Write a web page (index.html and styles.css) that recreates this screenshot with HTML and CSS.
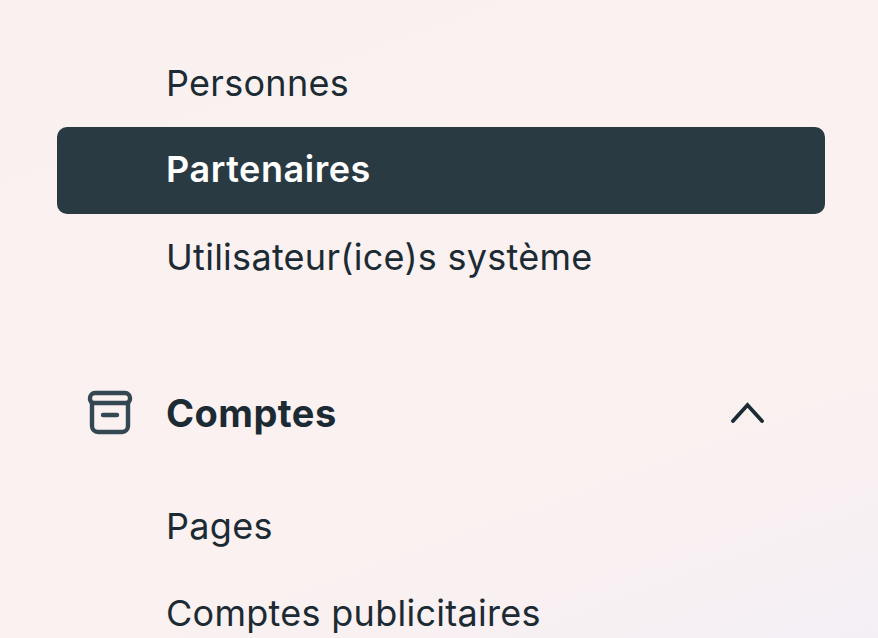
FILE: index.html
```html
<!DOCTYPE html>
<html lang="fr">
<head>
<meta charset="utf-8">
<title>Paramètres</title>
<link rel="stylesheet" href="styles.css">
</head>
<body>
<nav class="nav">
  <a class="item">Personnes</a>
  <a class="item active">Partenaires</a>
  <a class="item">Utilisateur(ice)s système</a>
  <div class="section">
    <svg class="box" width="48" height="48" viewBox="0 0 48 48" fill="none" stroke="#344854" stroke-width="4.4" stroke-linejoin="round" stroke-linecap="round">
      <path d="M3 9a5 5 0 0 1 5-5h30a5 5 0 0 1 5 5v1a4 4 0 0 1-4 4H7a4 4 0 0 1-4-4z"/>
      <path d="M5 14v23a6 6 0 0 0 6 6h24a6 6 0 0 0 6-6V14"/>
      <path d="M16 26h14"/>
    </svg>
    <span class="section-label">Comptes</span>
    <svg class="chev" width="36" height="24" viewBox="0 0 36 24" fill="none" stroke="#1c2b33" stroke-width="3.8" stroke-linecap="round" stroke-linejoin="miter">
      <path d="M3 20 17.5 4 32 20"/>
    </svg>
  </div>
  <a class="item">Pages</a>
  <a class="item">Comptes publicitaires</a>
</nav>
</body>
</html>
```
FILE: styles.css
```css
html, body {
  margin: 0;
  height: 100%;
}
body {
  width: 878px;
  height: 638px;
  overflow: hidden;
  background: linear-gradient(160deg, #f9f1f0 0%, #faf1f0 60%, #f9f0f1 80%, #f3eff5 100%);
  font-family: "Inter", "Liberation Sans", sans-serif;
  color: #1c2b33;
}
.nav {
  display: flex;
  flex-direction: column;
  width: 768px;
  margin-left: 57px;
  padding-top: 40px;
}
.item {
  display: flex;
  align-items: center;
  flex: none;
  height: 87px;
  padding-left: 109px;
  border-radius: 10px;
  font-size: 36px;
  letter-spacing: 0.28px;
  font-weight: 400;
  line-height: 83px;
}
.active {
  background: #2a3a43;
  color: #fff;
  font-weight: 600;
  letter-spacing: 0.55px;
  padding-bottom: 3px;
  height: 84px;
}
.section {
  display: flex;
  align-items: center;
  height: 104px;
  margin: 60px 0 18px;
  padding-left: 30px;
}
.box {
  flex: none;
}
.section-label {
  margin-left: 31px;
  font-size: 38px;
  font-weight: 700;
  line-height: 100px;
  letter-spacing: 0.45px;
  flex: 1;
}
.chev {
  margin-right: 59px;
}
```
